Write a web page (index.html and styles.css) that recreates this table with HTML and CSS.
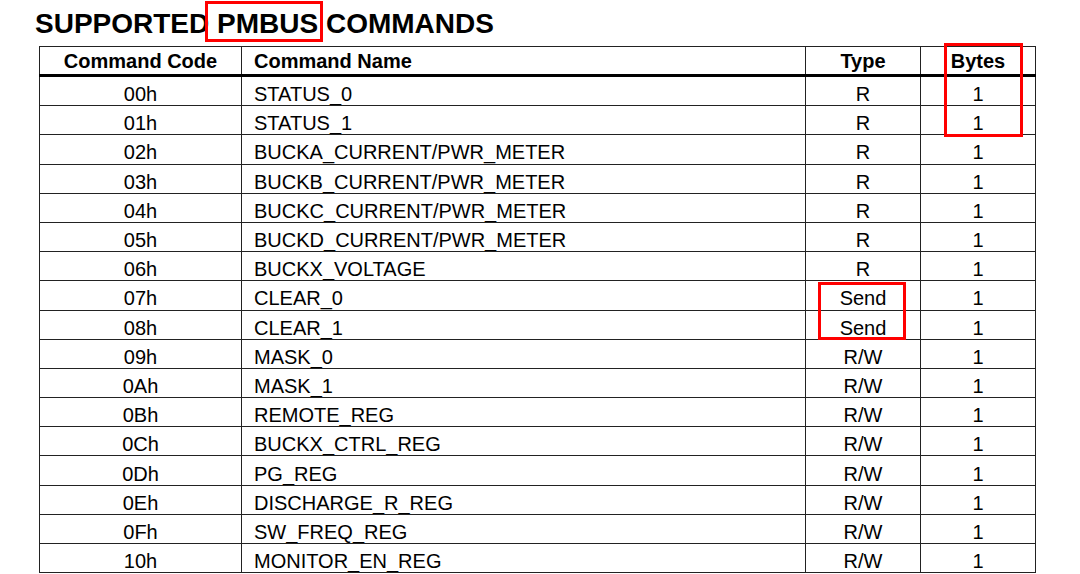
FILE: index.html
```html
<!DOCTYPE html>
<html>
<head>
<meta charset="utf-8">
<link rel="stylesheet" href="styles.css">
</head>
<body>
<div class="page">
  <h1 class="title">SUPPORTED <span class="mark">PMBUS</span> COMMANDS</h1>
  <div class="table-wrap">
    <table class="cmds">
      <colgroup>
        <col class="w-code">
        <col class="w-name">
        <col class="w-type">
        <col class="w-bytes">
      </colgroup>
      <thead>
        <tr><th>Command Code</th><th class="c-name">Command Name</th><th>Type</th><th>Bytes</th></tr>
      </thead>
      <tbody>
        <tr><td>00h</td><td class="c-name">STATUS_0</td><td>R</td><td>1</td></tr>
        <tr><td>01h</td><td class="c-name">STATUS_1</td><td>R</td><td>1</td></tr>
        <tr><td>02h</td><td class="c-name">BUCKA_CURRENT/PWR_METER</td><td>R</td><td>1</td></tr>
        <tr><td>03h</td><td class="c-name">BUCKB_CURRENT/PWR_METER</td><td>R</td><td>1</td></tr>
        <tr><td>04h</td><td class="c-name">BUCKC_CURRENT/PWR_METER</td><td>R</td><td>1</td></tr>
        <tr><td>05h</td><td class="c-name">BUCKD_CURRENT/PWR_METER</td><td>R</td><td>1</td></tr>
        <tr><td>06h</td><td class="c-name">BUCKX_VOLTAGE</td><td>R</td><td>1</td></tr>
        <tr><td>07h</td><td class="c-name">CLEAR_0</td><td>Send</td><td>1</td></tr>
        <tr><td>08h</td><td class="c-name">CLEAR_1</td><td>Send</td><td>1</td></tr>
        <tr><td>09h</td><td class="c-name">MASK_0</td><td>R/W</td><td>1</td></tr>
        <tr><td>0Ah</td><td class="c-name">MASK_1</td><td>R/W</td><td>1</td></tr>
        <tr><td>0Bh</td><td class="c-name">REMOTE_REG</td><td>R/W</td><td>1</td></tr>
        <tr><td>0Ch</td><td class="c-name">BUCKX_CTRL_REG</td><td>R/W</td><td>1</td></tr>
        <tr><td>0Dh</td><td class="c-name">PG_REG</td><td>R/W</td><td>1</td></tr>
        <tr><td>0Eh</td><td class="c-name">DISCHARGE_R_REG</td><td>R/W</td><td>1</td></tr>
        <tr><td>0Fh</td><td class="c-name">SW_FREQ_REG</td><td>R/W</td><td>1</td></tr>
        <tr><td>10h</td><td class="c-name">MONITOR_EN_REG</td><td>R/W</td><td>1</td></tr>
      </tbody>
    </table>
    <div class="box box-bytes"></div>
    <div class="box box-send"></div>
  </div>
</div>
</body>
</html>
```

FILE: styles.css
```css
html, body {
  margin: 0;
  padding: 0;
  background: #fff;
}
body {
  font-family: "Liberation Sans", Arial, sans-serif;
  color: #000;
  overflow: hidden;
}
.page {
  width: 1080px;
  height: 574px;
  overflow: hidden;
}
.title {
  margin: 0;
  padding: 8px 0 0 35px;
  height: 41px;
  box-sizing: border-box;
  font-size: 28px;
  line-height: 32px;
  font-weight: bold;
}
.mark {
  position: relative;
}
.mark::after {
  content: "";
  position: absolute;
  left: -12px;
  right: -5px;
  top: -7px;
  bottom: -3px;
  border: 3px solid #f00;
}
.table-wrap {
  position: relative;
  margin-left: 39px;
  margin-top: 5px;
  width: 996px;
}
.cmds {
  border-collapse: collapse;
  width: 996px;
  table-layout: fixed;
}
.w-code { width: 202px; }
.w-name { width: 564px; }
.w-type { width: 115px; }
.w-bytes { width: 115px; }
.cmds th, .cmds td {
  border: 1px solid #222;
  padding: 0;
  font-size: 20px;
  line-height: 22px;
  white-space: nowrap;
  text-align: center;
  overflow: hidden;
}
.cmds th {
  height: 27px;
  font-weight: bold;
  border-bottom: 3px solid #000;
}
.cmds td {
  height: 22.2px;
  padding-top: 6px;
}
.cmds .c-name {
  text-align: left;
  padding-left: 12px;
}
.box {
  position: absolute;
  box-sizing: border-box;
  border: 3px solid #f00;
}
.box-bytes {
  left: 905px;
  top: -3px;
  width: 79px;
  height: 94px;
}
.box-send {
  left: 779px;
  top: 236px;
  width: 88px;
  height: 58px;
}
```
